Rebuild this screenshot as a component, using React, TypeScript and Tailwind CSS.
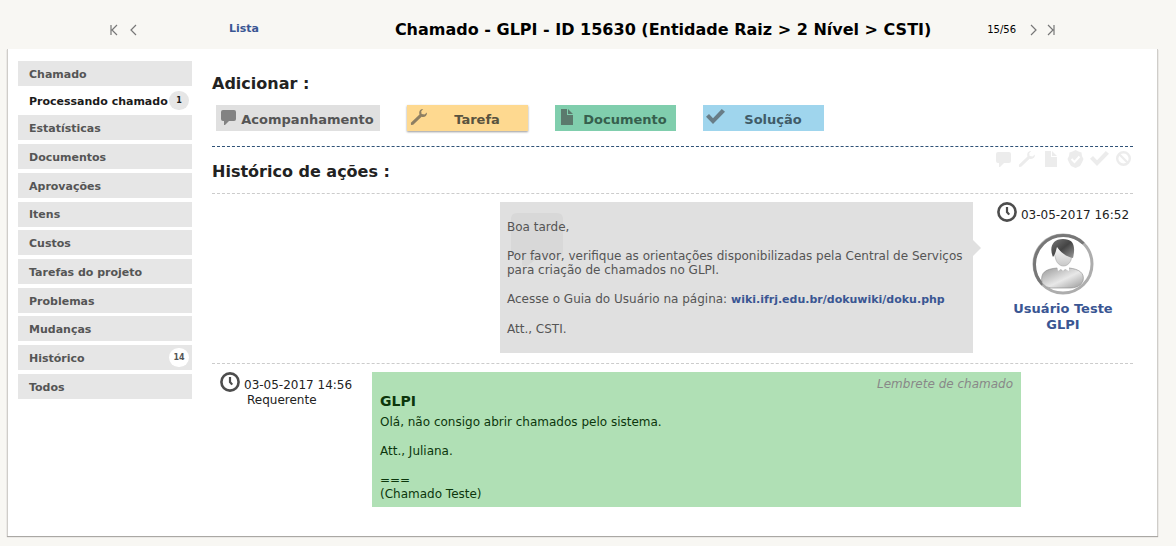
import type { ReactNode } from "react";
import clsx from "clsx";

type Tab = {
    label: string;
    count?: number;
    active?: boolean;
};

const tabs: Tab[] = [
    { label: "Chamado" },
    { label: "Processando chamado", count: 1, active: true },
    { label: "Estatísticas" },
    { label: "Documentos" },
    { label: "Aprovações" },
    { label: "Itens" },
    { label: "Custos" },
    { label: "Tarefas do projeto" },
    { label: "Problemas" },
    { label: "Mudanças" },
    { label: "Histórico", count: 14 },
    { label: "Todos" },
];

export default function App() {
    return (
        <div className="min-h-screen bg-[#f8f7f3] pb-2 font-['DejaVu_Sans',Verdana,sans-serif] text-[#222]">
            <Header />
            <main className="mr-[18px] ml-[7px] flex gap-5 border-x border-[#cfcdc9] bg-white pt-3 pr-6 pb-[29px] pl-[10px] shadow-[0_1px_1px_#aaa8a4]">
                <Sidebar />
                <div className="min-w-0 flex-1">
                    <AddActions />
                    <Timeline />
                </div>
            </main>
        </div>
    );
}

function Header() {
    return (
        <header className="flex h-[49px] items-center pt-[10px] pr-[120px] pl-[110px] text-[10px] text-black">
            <NavButton label="Primeiro" path="M1 1v10M7 1L2 6l5 5" />
            <NavButton label="Anterior" path="M8 1L3 6l5 5" className="ml-2" />
            <a
                href="#lista"
                className="ml-[91px] text-[11px] font-bold text-[#3a5693]"
            >
                Lista
            </a>
            <h1 className="flex-1 pl-20 text-center text-base font-bold whitespace-nowrap">
                Chamado - GLPI - ID 15630 (Entidade Raiz &gt; 2 Nível &gt; CSTI)
            </h1>
            <span>15/56</span>
            <NavButton label="Próximo" path="M3 1l5 5-5 5" className="ml-3" />
            <NavButton
                label="Último"
                path="M2 1l5 5-5 5M8 1v10"
                className="ml-2"
            />
        </header>
    );
}

function NavButton({
    label,
    path,
    className,
}: {
    label: string;
    path: string;
    className?: string;
}) {
    return (
        <button type="button" aria-label={label} className={className}>
            <svg
                width="10"
                height="12"
                viewBox="0 0 10 12"
                fill="none"
                stroke="#777"
                strokeWidth="1.2"
            >
                <path d={path} />
            </svg>
        </button>
    );
}

function Sidebar() {
    return (
        <nav className="w-[174px] shrink-0">
            <ul className="flex min-h-[338px] flex-col justify-between text-[11px] font-bold">
                {tabs.map((tab) => (
                    <li key={tab.label}>
                        <a
                            href="#tab"
                            className={clsx(
                                "flex items-center justify-between pr-[3px] pl-[11px] whitespace-nowrap",
                                tab.active
                                    ? "h-[22px] text-[#1b1b1b]"
                                    : "h-[25px] bg-[#e6e6e6] text-[#555]"
                            )}
                        >
                            <span className="pt-[3px]">{tab.label}</span>
                            {tab.count && (
                                <span
                                    className={clsx(
                                        "flex h-[19px] w-5 shrink-0 items-center justify-center rounded-full text-[8px]",
                                        tab.active ? "bg-[#e6e6e6]" : "bg-white"
                                    )}
                                >
                                    {tab.count}
                                </span>
                            )}
                        </a>
                    </li>
                ))}
            </ul>
        </nav>
    );
}

function AddActions() {
    return (
        <section className="border-b border-dashed border-[#2f5277] pt-[13px] pb-[15px]">
            <h2 className="text-base leading-5 font-bold">Adicionar :</h2>
            <div className="mt-[11px] flex gap-[27px] pl-1 text-[13px] font-bold">
                <ActionButton
                    icon={<CommentIcon />}
                    className="w-[164px] bg-[#e0e0e0] text-[#555]"
                >
                    Acompanhamento
                </ActionButton>
                <ActionButton
                    icon={<WrenchIcon />}
                    className="w-[121px] bg-[#fed990] text-[#59533f] shadow-[0_1px_2px_#999]"
                >
                    Tarefa
                </ActionButton>
                <ActionButton
                    icon={<FileIcon />}
                    className="w-[121px] bg-[#80cead] text-[#365f4d]"
                >
                    Documento
                </ActionButton>
                <ActionButton
                    icon={<CheckIcon />}
                    className="w-[121px] bg-[#9fd5ed] text-[#405b68]"
                >
                    Solução
                </ActionButton>
            </div>
        </section>
    );
}

function ActionButton({
    icon,
    className,
    children,
}: {
    icon: ReactNode;
    className: string;
    children: ReactNode;
}) {
    return (
        <button
            type="button"
            className={clsx("flex h-[26px] items-start px-[3px]", className)}
        >
            <span className="pt-[3px] text-[#444] opacity-60">{icon}</span>
            <span className="flex-1 pt-[5px] text-center leading-5">
                {children}
            </span>
        </button>
    );
}

function Timeline() {
    return (
        <section>
            <div className="flex h-[47px] items-start justify-between border-b border-dashed border-[#ccc]">
                <h2 className="pt-[15px] text-base leading-5 font-bold">
                    Histórico de ações :
                </h2>
                <div className="flex gap-[5px] pt-[3px] text-[#ececec]">
                    <FilterButton label="Acompanhamentos">
                        <CommentIcon />
                    </FilterButton>
                    <FilterButton label="Tarefas">
                        <WrenchIcon />
                    </FilterButton>
                    <FilterButton label="Documentos">
                        <FileIcon />
                    </FilterButton>
                    <FilterButton label="Validações">
                        <SealIcon />
                    </FilterButton>
                    <FilterButton label="Soluções">
                        <CheckIcon />
                    </FilterButton>
                    <FilterButton label="Limpar">
                        <BanIcon />
                    </FilterButton>
                </div>
            </div>

            <article className="flex justify-end border-b border-dashed border-[#ccc] pt-2 pb-[10px]">
                <div className="relative flex w-[473px] flex-col gap-[15px] bg-[#e0e0e0] px-[7px] pt-[18px] pb-[17px] text-xs leading-[14px] text-[#555]">
                    <svg
                        className="absolute top-[10px] left-[10px]"
                        width="54"
                        height="56"
                        viewBox="0 0 54 56"
                        fill="#d8d8d8"
                    >
                        <path d="M7 1h40q6 0 6 6v32q0 6-6 6H29L17 54h-5v-9H7q-6 0-6-6V7q0-6 6-6z" />
                    </svg>
                    <svg
                        className="absolute top-[38px] left-full"
                        width="8"
                        height="16"
                        fill="#e0e0e0"
                    >
                        <path d="M0 0l8 8-8 8z" />
                    </svg>
                    <p className="relative">Boa tarde,</p>
                    <p className="relative">
                        Por favor, verifique as orientações disponibilizadas
                        pela Central de Serviços para criação de chamados no
                        GLPI.
                    </p>
                    <p>
                        Acesse o Guia do Usuário na página:{" "}
                        <a
                            href="#wiki"
                            className="text-[11px] font-bold text-[#3a5693]"
                        >
                            wiki.ifrj.edu.br/dokuwiki/doku.php
                        </a>
                    </p>
                    <p>Att., CSTI.</p>
                </div>
                <div className="flex w-[160px] flex-col items-center pl-5 text-[13px]">
                    <EventDate>03-05-2017 16:52</EventDate>
                    <Avatar />
                    <a
                        href="#usuario"
                        className="mt-[6px] text-center leading-4 font-bold text-[#3a5693]"
                    >
                        Usuário Teste
                        <br />
                        GLPI
                    </a>
                </div>
            </article>

            <article className="flex pt-2">
                <div className="w-[160px] shrink-0 pl-2 text-xs">
                    <EventDate>03-05-2017 14:56</EventDate>
                    <p className="pl-[27px] leading-4">Requerente</p>
                </div>
                <div className="mr-28 flex-1 bg-[#b0e0b5] pt-1 pr-2 pb-[6px] pl-2 text-xs leading-[14px] text-[#0c360c]">
                    <p className="text-right leading-4 text-[#888] italic">
                        Lembrete de chamado
                    </p>
                    <h3 className="text-sm leading-[18px] font-bold">GLPI</h3>
                    <div className="flex flex-col gap-[15px] pt-[5px]">
                        <p>Olá, não consigo abrir chamados pelo sistema.</p>
                        <p>Att., Juliana.</p>
                        <p>
                            ===
                            <br />
                            (Chamado Teste)
                        </p>
                    </div>
                </div>
            </article>
        </section>
    );
}

function FilterButton({
    label,
    children,
}: {
    label: string;
    children: ReactNode;
}) {
    return (
        <button type="button" aria-label={label}>
            {children}
        </button>
    );
}

function EventDate({ children }: { children: ReactNode }) {
    return (
        <div className="flex h-5 items-center gap-1 text-xs whitespace-nowrap">
            <svg
                width="20"
                height="20"
                viewBox="0 0 20 20"
                fill="none"
                stroke="#4d4d4d"
            >
                <circle cx="10" cy="10" r="8.6" strokeWidth="2.6" />
                <path d="M10 5v5l2.2 2.6" strokeWidth="2.2" />
            </svg>
            <time className="pt-[5px]">{children}</time>
        </div>
    );
}

function Avatar() {
    return (
        <svg
            className="mt-[11px]"
            width="62"
            height="62"
            viewBox="0 0 62 62"
            role="img"
            aria-label="Usuário"
        >
            <defs>
                <linearGradient id="ring" x1="0" y1="0.4" x2="0.6" y2="1">
                    <stop offset="0" stopColor="#777" />
                    <stop offset="0.1" stopColor="#777" />
                    <stop offset="0.2" stopColor="#aaa" />
                    <stop offset="1" stopColor="#b0b0b0" />
                </linearGradient>
                <linearGradient id="hair" x1="0" y1="0" x2="1" y2="1">
                    <stop offset="0" stopColor="#777" />
                    <stop offset="0.5" stopColor="#444" />
                    <stop offset="1" stopColor="#999" />
                </linearGradient>
                <linearGradient id="face" x1="0" y1="0" x2="0" y2="1">
                    <stop offset="0" stopColor="#fff" />
                    <stop offset="1" stopColor="#c8c8c8" />
                </linearGradient>
                <linearGradient id="body" x1="0" y1="0" x2="1" y2="1">
                    <stop offset="0" stopColor="#999" />
                    <stop offset="0.55" stopColor="#e8e8e8" />
                    <stop offset="1" stopColor="#999" />
                </linearGradient>
            </defs>
            <circle
                cx="31"
                cy="31"
                r="29"
                fill="#fff"
                stroke="#adadad"
                strokeWidth="3"
            />
            <path
                d="M10.500 51.500A29 29 0 0 1 51.500 10.500"
                fill="none"
                stroke="#777"
                strokeWidth="3"
            />
            <path
                d="M10 50C8 39 14 36 25 35q6 4 12 0c10 1 16 5 14 13-3 6-8 7-14 7H19q-5 0-9-5z"
                fill="url(#body)"
                stroke="#888"
                strokeWidth="0.6"
            />
            <path d="M25 33l1 5 3-2 2 2 2-2 4 2v-5z" fill="#fff" />
            <path
                d="M21 16c2-6 18-6 20 2l-2 9c-3 8-12 8-15 0z"
                fill="url(#face)"
                stroke="#999"
                strokeWidth="0.5"
            />
            <path
                d="M21 24c-4-9-1-18 10-18 10 0 13 6 10 19-6-1-12-5-16-11-1 3-1 6-4 10z"
                fill="url(#hair)"
            />
        </svg>
    );
}

function CommentIcon() {
    return (
        <svg width="19" height="19" viewBox="0 0 19 19" fill="currentColor">
            <path d="M4 2h11q2 0 2 2v7q0 2-2 2h-5l-4 4H5v-4H4q-2 0-2-2V4q0-2 2-2z" />
        </svg>
    );
}

function WrenchIcon() {
    return (
        <svg width="19" height="19" viewBox="0 0 19 19" fill="currentColor">
            <path d="M13.2 1l-2 2.2.4 2.8 3 .4 2.3-1.8c.4 3.3-2.4 5-5.3 4.1L3.2 16.8 1 16.9.9 14.8 9.5 6.4C8.5 3.4 10.2.9 13.2 1z" />
        </svg>
    );
}

function FileIcon() {
    return (
        <svg width="19" height="19" viewBox="0 0 19 19" fill="currentColor">
            <path d="M3 1h6v6h6v10H3zM10 1l5 5h-5z" />
        </svg>
    );
}

function CheckIcon() {
    return (
        <svg width="19" height="19" viewBox="0 0 19 19" fill="currentColor">
            <path d="M0 8.8L3 6l4 4.2L15.8 1 19 3.8 7 16z" />
        </svg>
    );
}

function SealIcon() {
    return (
        <svg width="19" height="19" viewBox="0 0 19 19">
            <path
                d="M9.500 0l3 1.500 3 1 .5 3.500L17.500 9 16 12.500 14 16l-4.500 2L5 16l-2-3.500L1.500 9 3 6l.5-3.500 3-1z"
                fill="currentColor"
            />
            <path
                d="M5.500 9l3 3 5-5.500"
                fill="none"
                stroke="#fff"
                strokeWidth="2"
            />
        </svg>
    );
}

function BanIcon() {
    return (
        <svg
            width="19"
            height="19"
            viewBox="0 0 19 19"
            fill="none"
            stroke="currentColor"
            strokeWidth="2.4"
        >
            <circle cx="9.500" cy="8.500" r="6.300" />
            <path d="M5 4l9 9" />
        </svg>
    );
}
